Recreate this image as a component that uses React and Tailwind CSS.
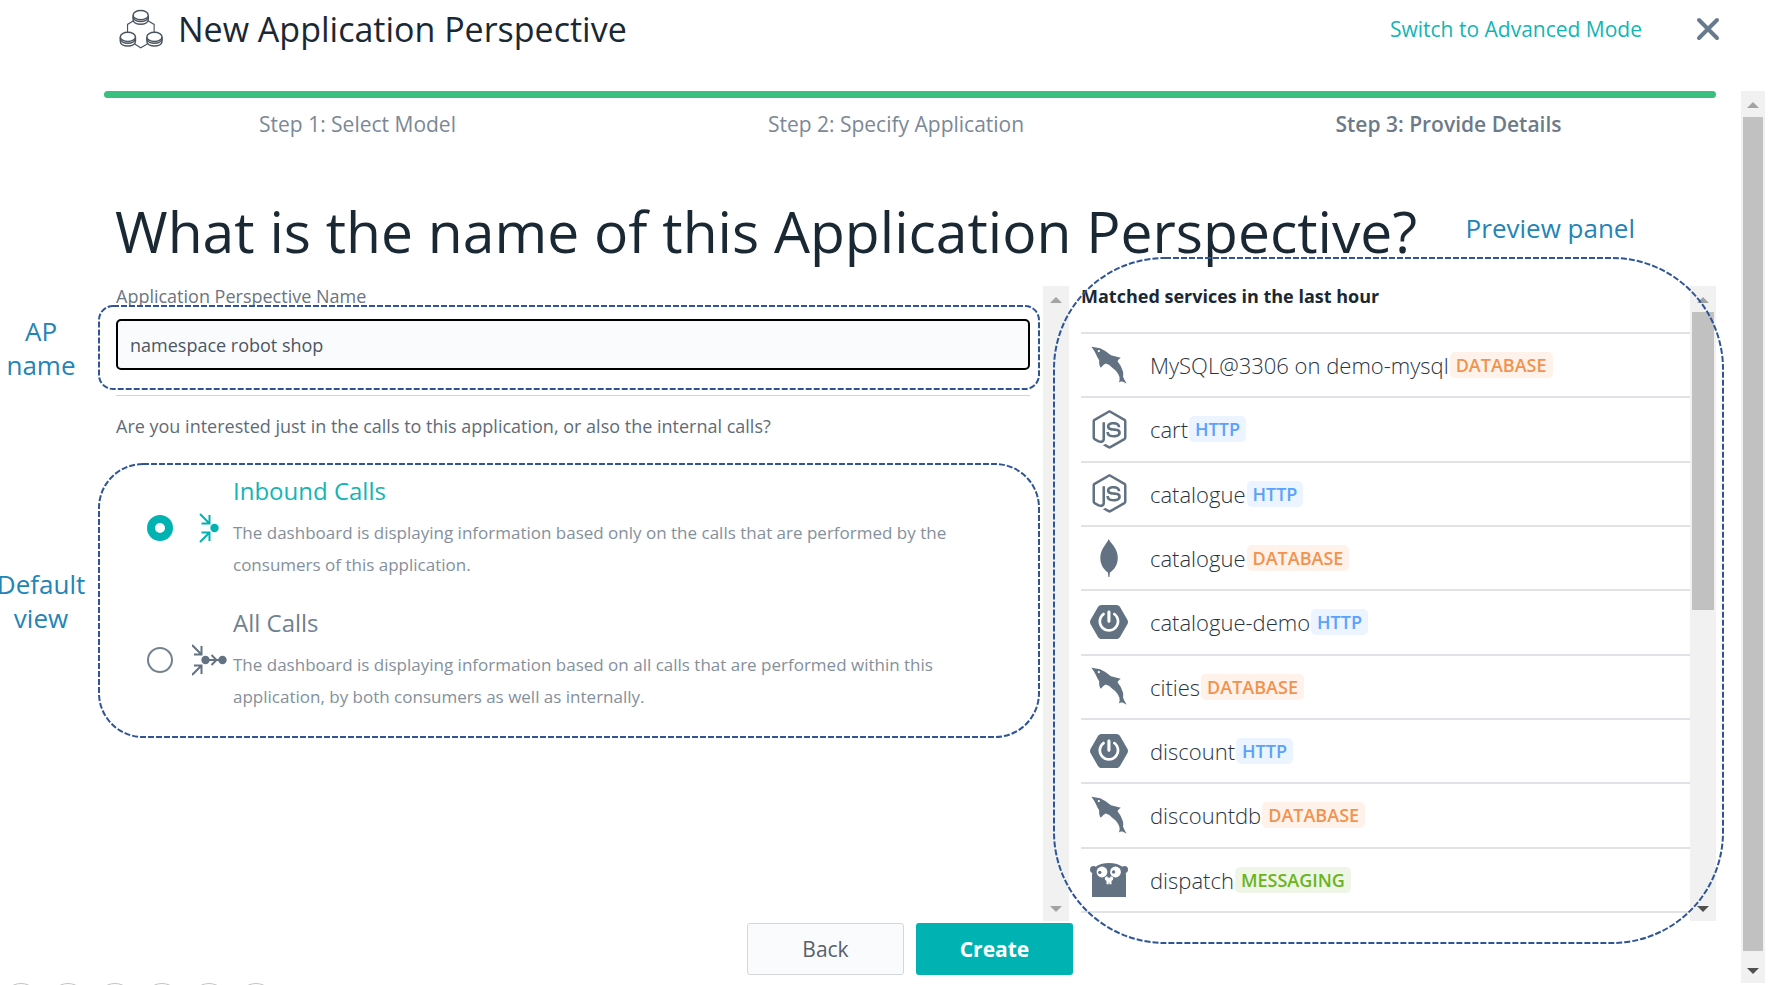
import { useState } from "react";
import { FaNodeJs } from "react-icons/fa";
import { SiSpringboot } from "react-icons/si";

const STEPS = [
  { label: "Step 1: Select Model", className: "text-[#7b8896]" },
  { label: "Step 2: Specify Application", className: "text-[#7b8896]" },
  { label: "Step 3: Provide Details", className: "font-semibold text-[#6c7a89]" },
];

const CALL_OPTIONS = [
  {
    id: "inbound",
    title: "Inbound Calls",
    text: "The dashboard is displaying information based only on the calls that are performed by the consumers of this application.",
    Icon: InboundIcon,
  },
  {
    id: "all",
    title: "All Calls",
    text: "The dashboard is displaying information based on all calls that are performed within this application, by both consumers as well as internally.",
    Icon: AllCallsIcon,
  },
];

const SERVICES = [
  { name: "MySQL@3306 on demo-mysql", type: "DATABASE", Icon: DolphinIcon },
  { name: "cart", type: "HTTP", Icon: NodeIcon },
  { name: "catalogue", type: "HTTP", Icon: NodeIcon },
  { name: "catalogue", type: "DATABASE", Icon: MongoIcon },
  { name: "catalogue-demo", type: "HTTP", Icon: SpringIcon },
  { name: "cities", type: "DATABASE", Icon: DolphinIcon },
  { name: "discount", type: "HTTP", Icon: SpringIcon },
  { name: "discountdb", type: "DATABASE", Icon: DolphinIcon },
  { name: "dispatch", type: "MESSAGING", Icon: GopherIcon },
];

const BADGE_COLORS = {
  DATABASE: "bg-[#fff2ea] text-[#f2924f]",
  HTTP: "bg-[#ebf4ff] text-[#5aa2fb]",
  MESSAGING: "bg-[#eff6e7] text-[#6ab41e]",
};

function NodeIcon() {
  return <FaNodeJs className="h-[39px] w-[35px]" />;
}

function MongoIcon() {
  return (
    <svg viewBox="0 0 18 38" className="h-[38px] w-[18px]" fill="currentColor">
      <path d="M8.7 0 C9.6 3.4 17.8 8.6 17.8 19 C17.8 27 13 31.5 9.9 33.6 L9.4 38 H8.4 L7.9 33.6 C4.6 31 .3 26.500 .3 19 C.3 9.500 7.600 4 8.700 0 Z" />
    </svg>
  );
}

function SpringIcon() {
  return <SiSpringboot className="size-[38px]" />;
}

function DolphinIcon() {
  return (
    <svg viewBox="32 32 110 116" className="h-[39px] w-9" fill="currentColor">
      <path d="M33 33 Q48 35 60 37 Q77 44 93 59 Q108 63 123 66 Q116 70 113 77 Q125 91 130 109 Q131 117 130 124 Q134 134 141 146 Q134 141 128 139 Q122 138 117 142 Q121 134 119 125 Q114 109 97 97 Q89 87 77 84 Q70 86 62 97 Q56 90 57 74 Q51 66 47 55 Q42 44 33 33 Z" />
      <circle cx="56" cy="46" r="3.5" fill="#fff" />
    </svg>
  );
}

function GopherIcon() {
  return (
    <svg viewBox="0 0 38 34" className="h-[34px] w-[38px]" fill="currentColor">
      <circle cx="3.5" cy="6.5" r="3.5" />
      <circle cx="34.5" cy="6.5" r="3.5" />
      <path d="M2 34 V12 C2 4 9 0 19 0 S36 4 36 12 V34 Z" />
      <circle cx="12" cy="9" r="5.4" fill="#fff" />
      <circle cx="25.5" cy="9" r="5.4" fill="#fff" />
      <circle cx="9.8" cy="9.4" r="1.7" />
      <circle cx="23.6" cy="9" r="1.7" />
      <ellipse cx="19" cy="15.5" rx="4.2" ry="2.6" fill="#fff" />
      <path d="M16.5 16 h5 v5.2 h-2.2 v-2 h-.6 v2 h-2.2 Z" fill="#fff" />
      <ellipse cx="19" cy="13.6" rx="1.7" ry="1.2" />
    </svg>
  );
}

function Coin({ x, y }) {
  return (
    <g transform={`translate(${x} ${y})`}>
      <path d="M-23 0 V14 C-23 32 23 32 23 14 V0" fill="#fff" />
      <path d="M-23 5 C-22 24 22 24 23 5" />
      <ellipse rx="23" ry="14" fill="#fff" />
    </g>
  );
}

function PerspectiveIcon() {
  return (
    <svg viewBox="12 11 134 120" className="h-10 w-11" fill="none" stroke="#4a5560" strokeWidth="4.5">
      <path d="M56 46 L38 57 V80 M100 46 L119 57 V80 M60 117 L78 128 L98 117" strokeWidth="3.5" />
      <Coin x={78} y={29} />
      <Coin x={39} y={95} />
      <Coin x={120} y={95} />
    </svg>
  );
}

function InboundIcon() {
  return (
    <svg viewBox="0 0 36 32" className="h-8 w-9" fill="none" stroke="currentColor" strokeWidth="2">
      <path d="M8 2 L17 11 M17.5 3 V11.5 H9.5 M8 30 L17 21 M17.5 29 V20.5 H9.5" />
      <circle cx="22.5" cy="16" r="4.2" fill="currentColor" stroke="none" />
    </svg>
  );
}

function AllCallsIcon() {
  return (
    <svg viewBox="0 0 36 32" className="h-8 w-9" fill="none" stroke="currentColor" strokeWidth="2">
      <path d="M0 1 L9 10 M9.5 2 V10.5 H2 M0 31 L9 22 M9.5 30 V21.5 H2 M14 16 H29 M19.5 11 L24.5 16 L19.5 21" />
      <circle cx="13.5" cy="16" r="4.2" fill="currentColor" stroke="none" />
      <circle cx="30.5" cy="16" r="4.2" fill="currentColor" stroke="none" />
    </svg>
  );
}

// Dashed callout outline, drawn over the area it marks
function Outline({ radius, className }) {
  return (
    <svg className={`pointer-events-none absolute ${className}`} fill="none" stroke="#2f5597" strokeWidth="2" strokeDasharray="6 2">
      <rect x="1" y="1" rx={radius} className="h-[calc(100%-2px)] w-[calc(100%-2px)]" />
    </svg>
  );
}

function Note({ children, className = "" }) {
  return <p className={`text-center text-[26px] leading-[34px] text-[#2484b6] ${className}`}>{children}</p>;
}

function Arrow({ down, active }) {
  return (
    <svg viewBox="0 0 12 6" className={`h-1.5 w-3 ${active ? "text-[#505050]" : "text-[#a3a3a3]"}`} fill="currentColor">
      <path d={down ? "M0 0 H12 L6 6 Z" : "M0 6 H12 L6 0 Z"} />
    </svg>
  );
}

function Scrollbar({ active, className = "", children }) {
  return (
    <div className={`flex shrink-0 flex-col items-center bg-[#f1f1f1] ${className}`} aria-hidden="true">
      <div className="flex h-[26px] shrink-0 items-center pt-px"><Arrow /></div>
      <div className="flex w-full flex-1 flex-col px-0.5">{children}</div>
      <div className="flex h-6 shrink-0 items-center"><Arrow down active={active} /></div>
    </div>
  );
}

function Header() {
  return (
    <header className="flex h-[91px] items-start pr-[55px] pl-[119px] pt-[9px]">
      <div className="flex h-10 flex-1 items-center">
        <PerspectiveIcon />
        <h1 className="ml-[15px] text-[34px] leading-10 font-medium">New Application Perspective</h1>
        <a href="#advanced" className="ml-auto text-[21px] leading-8 text-[#12b5b5]">Switch to Advanced Mode</a>
        <button type="button" aria-label="Close" className="ml-[54px]">
          <svg viewBox="0 0 24 24" className="size-6" fill="none" stroke="#687a8e" strokeWidth="4" strokeLinecap="round">
            <path d="M3 3 L21 21 M21 3 L3 21" />
          </svg>
        </button>
      </div>
    </header>
  );
}

function CallOption({ option, checked, onChange }) {
  const { id, title, text, Icon } = option;
  return (
    <label className="flex items-center pr-20 pl-[31px]">
      <input
        type="radio"
        name="calls"
        value={id}
        checked={checked}
        onChange={onChange}
        className="size-[26px] shrink-0 appearance-none rounded-full border-2 border-[#74828f] bg-white checked:border-8 checked:border-[#00b3b3]"
      />
      <span className={`ml-[19px] w-[41px] shrink-0 ${checked ? "text-[#00b3b3]" : "text-[#637282]"}`}>
        <Icon />
      </span>
      <span>
        <span className={`block text-[24px] leading-8 ${checked ? "text-[#12b5b5]" : "text-[#71808e]"}`}>{title}</span>
        <span className="mt-2.5 block text-[17px] leading-8 text-[#84909c]">{text}</span>
      </span>
    </label>
  );
}

function DetailsForm() {
  const [name, setName] = useState("namespace robot shop");
  const [calls, setCalls] = useState("inbound");

  return (
    <form className="min-w-0 flex-1 pr-[13px] pl-3">
      <div className="relative">
        <label htmlFor="ap-name" className="block text-[18px] leading-5 text-[#6a7581]">Application Perspective Name</label>
        <input
          id="ap-name"
          type="text"
          value={name}
          onChange={(e) => setName(e.target.value)}
          className="mt-[13px] block h-[51px] w-full rounded-[5px] border-2 border-black bg-[#fafbfd] px-3 text-[18px] text-[#4a5663] outline-none"
        />
        <Outline radius={14} className="top-[19px] -left-[18px] h-[85px] w-[calc(100%+28px)]" />
      </div>
      <hr className="mt-[25px] border-[#cfd6da]" />
      <p className="mt-[18px] text-[18px] leading-6 text-[#5f6b77]">
        Are you interested just in the calls to this application, or also the internal calls?
      </p>
      <fieldset className="relative mt-[25px] flex flex-col gap-[26px] pt-3 pb-[25px]">
        {CALL_OPTIONS.map((option) => (
          <CallOption key={option.id} option={option} checked={calls === option.id} onChange={() => setCalls(option.id)} />
        ))}
        <Outline radius={44} className="top-0 -left-[18px] h-full w-[calc(100%+28px)]" />
      </fieldset>
    </form>
  );
}

function ServiceList() {
  return (
    <section className="flex min-w-0 flex-1 flex-col pb-2">
      <h3 className="h-[46px] text-[18px] leading-5 font-bold">Matched services in the last hour</h3>
      <ul className="flex flex-1 flex-col border-t-2 border-[#dfe3e7]">
        {SERVICES.map(({ name, type, Icon }, i) => (
          <li key={i} className="flex flex-1 items-center border-b-2 border-[#dfe3e7]">
            <span className="ml-[9px] flex w-[38px] justify-center text-[#637282]"><Icon /></span>
            <span className="ml-[22px] text-[22px] leading-8 font-light text-[#28343f]">{name}</span>
            <span className={`ml-px rounded-[5px] px-1.5 text-[18px] leading-[26px] font-semibold ${BADGE_COLORS[type]}`}>{type}</span>
          </li>
        ))}
      </ul>
    </section>
  );
}

export default function App() {
  return (
    <div className="flex min-h-screen flex-col overflow-hidden bg-white font-['Open_Sans','Noto_Sans',sans-serif] text-[#1a2834]">
      <Header />
      <div className="flex flex-1 pr-2.5">
        <aside className="flex w-[104px] shrink-0 flex-col items-center pt-[223px] pr-[22px]">
          <Note className="pb-[185px]">AP<br />name</Note>
          <Note>Default<br />view</Note>
        </aside>

        <main className="flex min-w-0 flex-1 flex-col">
          <div className="h-[7px] rounded-full bg-[#3bbf7e]" />
          <ol className="mt-2.5 grid grid-cols-[507fr_570fr_535fr] text-center text-[21px] leading-8">
            {STEPS.map((step) => (
              <li key={step.label} className={step.className}>{step.label}</li>
            ))}
          </ol>
          <div className="mt-[59px] flex items-start justify-between pr-[81px] pl-[11px]">
            <h2 className="text-[57px] leading-[64px] whitespace-nowrap">What is the name of this Application Perspective?</h2>
            <Note className="mt-3 whitespace-nowrap">Preview panel</Note>
          </div>

          <div className="mt-[23px] grid flex-1 grid-cols-[965fr_635fr] gap-3">
            <div className="flex">
              <DetailsForm />
              <Scrollbar className="w-[26px]" />
            </div>
            <div className="relative flex">
              <ServiceList />
              <Scrollbar active className="w-[26px]">
                <div className="h-[51%] bg-[#c1c1c1]" />
              </Scrollbar>
              <Outline radius={111} className="-top-[29px] -left-7 h-[calc(100%+52px)] w-[calc(100%+36px)]" />
            </div>
          </div>

          <div className="mt-0.5 mb-2 flex justify-center gap-3 text-[21px]">
            <button type="button" className="h-[52px] w-[157px] rounded-[3px] border border-[#d3d7dc] bg-[#fafbfd] pt-0.5 text-[#56616c]">Back</button>
            <button type="button" className="h-[52px] w-[157px] rounded-[3px] bg-[#00b3b3] pt-0.5 font-bold text-white">Create</button>
          </div>
        </main>

        <Scrollbar active className="ml-[25px] w-6">
          <div className="mb-2 flex-1 bg-[#c1c1c1]" />
        </Scrollbar>
      </div>

      {/* Slide controls, mostly below the fold */}
      <div className="flex h-0.5 gap-[9px] overflow-hidden pl-0.5">
        {[1, 2, 3, 4, 5, 6].map((n) => (
          <span key={n} className="size-[38px] shrink-0 rounded-full border border-[#c4c4c4]" />
        ))}
      </div>
    </div>
  );
}
